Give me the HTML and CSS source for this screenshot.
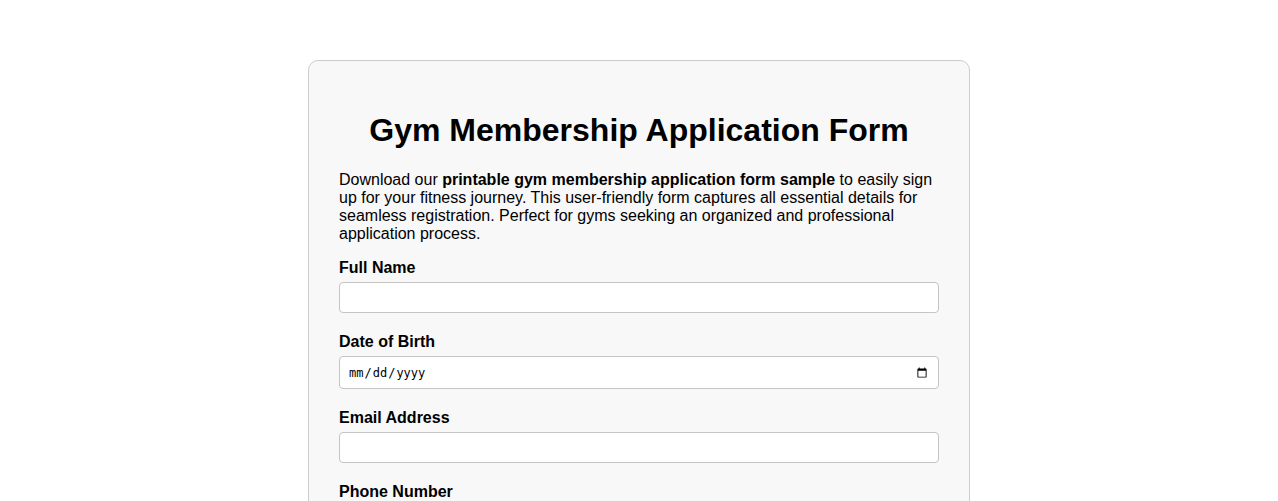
FILE: index.html
```html
<!DOCTYPE html>
<html lang="en">
<head>
<meta charset="utf-8">
<title>Gym Membership Application Form</title>
<link rel="stylesheet" href="styles.css">
</head>
<body>
<div class="container">
  <h1 class="title">Gym Membership Application Form</h1>
  <p class="intro">Download our <strong>printable gym membership application form sample</strong> to easily sign up for your fitness journey. This user-friendly form captures all essential details for seamless registration. Perfect for gyms seeking an organized and professional application process.</p>
  <form class="form">
    <label class="label" for="name">Full Name</label>
    <input class="field" type="text" id="name">
    <label class="label" for="dob">Date of Birth</label>
    <input class="field field-date" type="date" id="dob">
    <label class="label" for="email">Email Address</label>
    <input class="field" type="email" id="email">
    <label class="label" for="phone">Phone Number</label>
    <input class="field" type="tel" id="phone">
  </form>
</div>
</body>
</html>
```
FILE: styles.css
```css
html, body {
  margin: 0;
  padding: 0;
  background: #ffffff;
}
body {
  font-family: "Liberation Sans", Arial, sans-serif;
  color: #000;
  padding: 20px;
}
.container {
  width: 600px;
  margin: 40px auto 0;
  padding: 30px;
  background: #f8f8f8;
  border: 1px solid #cccccc;
  border-radius: 10px;
}
.title {
  font-size: 32px;
  text-align: center;
  margin: 21px 0 22px;
}
.intro {
  font-size: 16px;
  line-height: 18px;
  margin: 16px 0;
}
.label {
  display: block;
  font-weight: bold;
  font-size: 16px;
  line-height: 18px;
  margin-bottom: 5px;
}
.field {
  display: block;
  box-sizing: border-box;
  width: 100%;
  height: 31px;
  padding: 0 8px;
  margin-bottom: 20px;
  border: 1px solid #c4c4c4;
  border-radius: 4px;
  background: #fff;
  font-family: "Liberation Sans", Arial, sans-serif;
  font-size: 13.33px;
}
.field-date {
  height: 33px;
  font-family: "DejaVu Sans Mono", monospace;
  font-size: 12px;
}
```
